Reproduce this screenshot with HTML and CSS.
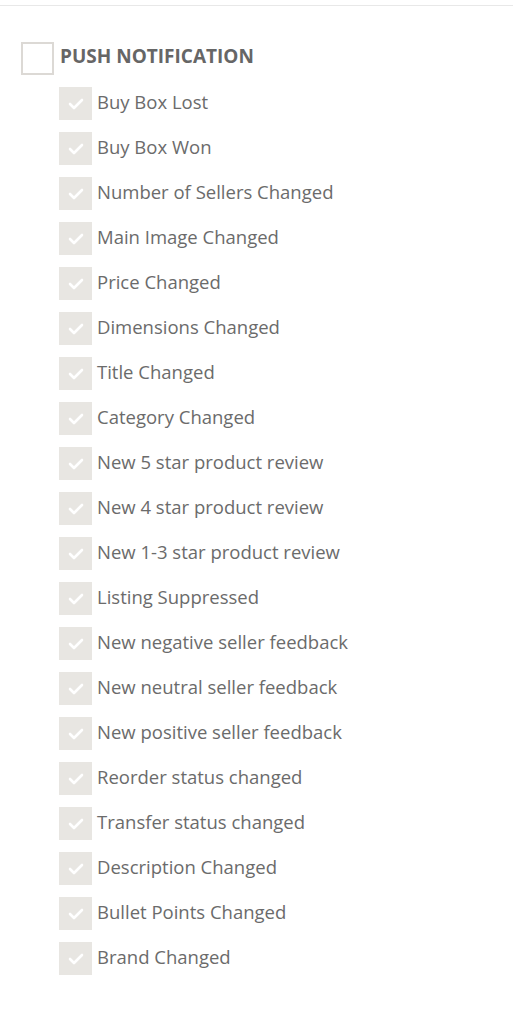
FILE: index.html
```html
<!DOCTYPE html>
<html lang="en">
<head>
<meta charset="UTF-8">
<meta name="viewport" content="width=device-width, initial-scale=1.0">
<title>Push Notification</title>
<link rel="stylesheet" href="styles.css">
</head>
<body>

<div id="panel">
    <div class="group-head">
        <span class="box box-empty"></span>
        <span class="group-title">PUSH NOTIFICATION</span>
    </div>
    <ul id="options"></ul>
</div>

<script>
    var names = [
        'Buy Box Lost', 'Buy Box Won', 'Number of Sellers Changed', 'Main Image Changed',
        'Price Changed', 'Dimensions Changed', 'Title Changed', 'Category Changed',
        'New 5 star product review', 'New 4 star product review', 'New 1-3 star product review',
        'Listing Suppressed', 'New negative seller feedback', 'New neutral seller feedback',
        'New positive seller feedback', 'Reorder status changed', 'Transfer status changed',
        'Description Changed', 'Bullet Points Changed', 'Brand Changed'
    ];
    var list = document.getElementById('options');
    names.forEach(function(name) {
        var li = document.createElement('li');
        li.className = 'option';
        li.innerHTML = `
            <span class="box box-checked"><svg width="16" height="12" viewBox="0 0 16 12"><path d="M2 6 L6 10 L14 2" fill="none" stroke="#fff" stroke-width="2.6" stroke-linecap="round" stroke-linejoin="round"/></svg></span>
            <span class="option-label">${name}</span>
        `;
        list.appendChild(li);
    });
</script>

</body>
</html>
```

FILE: styles.css
```css
body {
    margin: 0;
    background-color: #fff;
    font-family: "Open Sans", Arial, sans-serif;
    color: #6b6b6b;
}
#panel {
    margin-top: 5px;
    border-top: 1px solid #e8e8e8;
    padding: 30px 0 30px 21px;
}
.group-head {
    display: flex;
    align-items: center;
    height: 45px;
}
.box {
    width: 33px;
    height: 33px;
    box-sizing: border-box;
    display: flex;
    align-items: center;
    justify-content: center;
    flex-shrink: 0;
}
.box-empty {
    border: 2px solid #dcd9d5;
    background-color: #fff;
}
.box-checked {
    background-color: #e8e6e2;
}
.group-title {
    margin: 0 0 5px 6px;
    font-weight: bold;
    font-size: 19px;
    color: #666;
}
#options {
    list-style: none;
    margin: 0;
    padding: 0 0 0 38px;
}
.option {
    display: flex;
    align-items: center;
    height: 45px;
}
.option-label {
    margin: 0 0 5px 5px;
    font-size: 18.5px;
}
```
